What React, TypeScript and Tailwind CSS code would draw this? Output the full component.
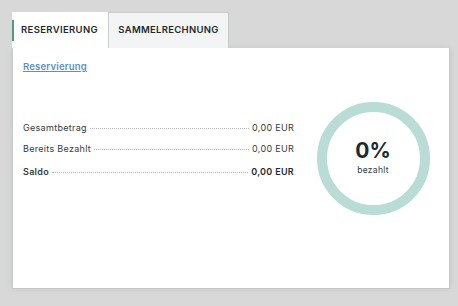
import React from "react";

// rows of the payment summary
const rows = [
  { label: "Gesamtbetrag", value: "0,00 EUR", bold: false },
  { label: "Bereits Bezahlt", value: "0,00 EUR", bold: false },
  { label: "Saldo", value: "0,00 EUR", bold: true },
];

export default function App() {
  return (
    <div
      className="w-[458px] h-[306px] bg-[#d8d8d8] pt-[12px] pl-[12px] pr-[8px] text-[#1d2b30]"
      style={{ fontFamily: "Inter, 'Open Sans', sans-serif" }}
    >
      {/* tabs */}
      <div className="flex h-[36px]">
        <div className="w-[96px] bg-white flex items-center relative">
          <div className="absolute left-0 top-[8px] h-[21px] w-[2px] bg-[#4f9a8b]" />
          <span className="pl-[9px] text-[9.5px] font-semibold tracking-[0.35px]">RESERVIERUNG</span>
        </div>
        <div className="w-[121px] bg-[#f3f4f4] border border-b-0 border-[#c7cbca] flex items-center justify-center">
          <span className="text-[9.5px] font-semibold tracking-[0.3px]">SAMMELRECHNUNG</span>
        </div>
      </div>

      {/* panel */}
      <div className="h-[241px] bg-white border border-t-0 border-[#c4c8c7] shadow-[0_0_6px_rgba(0,0,0,0.08)] px-[10px] pt-[4px]">
        <a className="text-[9.5px] font-semibold text-[#5d8fc8] underline tracking-[0.2px]">Reservierung</a>

        <div className="flex mt-[27px]">
          <div className="w-[271px] pt-[18px] flex flex-col">
            {rows.map((r, i) => (
              <div
                key={r.label}
                className={`flex items-baseline text-[9px] tracking-[0.3px] ${i === 2 ? "mt-[10px] font-semibold" : i === 1 ? "mt-[7px]" : ""}`}
              >
                <span className="text-[#333b3e]">{r.label}</span>
                <span className="flex-1 mx-[3px] border-b border-dotted border-[#b0b5b7] translate-y-[-2px]" />
                <span className={r.bold ? "text-[#1d2b30]" : "text-[#333b3e]"}>{r.value}</span>
              </div>
            ))}
          </div>

          <div className="flex-1 flex justify-center pl-[13px] -mt-[1px]">
            <div className="relative w-[113px] h-[113px]">
              <svg width="113" height="113" viewBox="0 0 113 113">
                <circle cx="56.5" cy="56.5" r="51.5" fill="none" stroke="#b9dcd6" strokeWidth="10" />
              </svg>
              <div className="absolute inset-0 flex flex-col items-center justify-center">
                <span className="text-[21px] font-bold leading-none">0%</span>
                <span className="text-[8.5px] mt-[3px] text-[#333b3e] tracking-[0.3px]">bezahlt</span>
              </div>
            </div>
          </div>
        </div>
      </div>
    </div>
  );
}
